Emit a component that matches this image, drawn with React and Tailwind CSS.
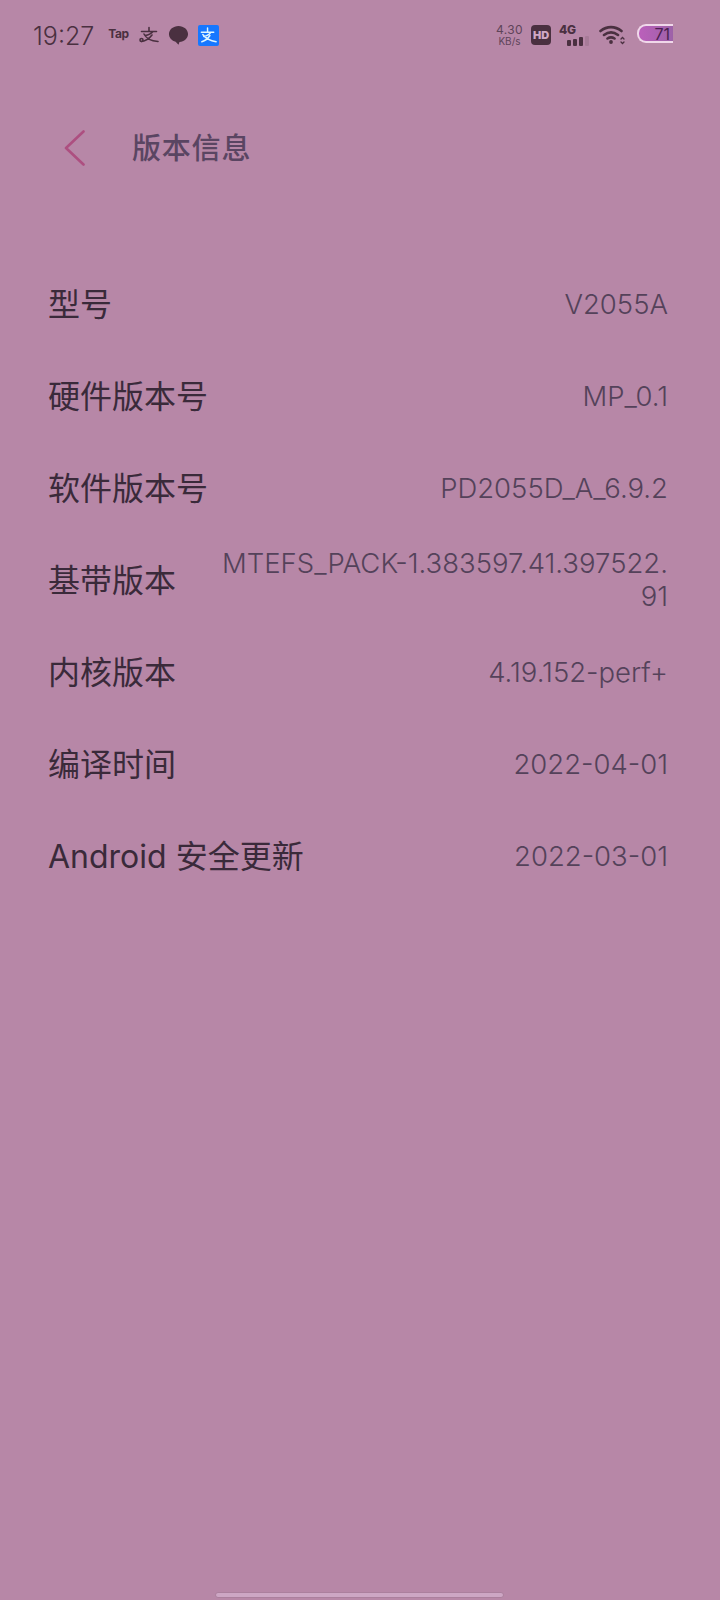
const sans = { fontFamily: '"Inter","Noto Sans CJK SC",sans-serif' };
const rows = [
  ["型号", ["V2055A"]],
  ["硬件版本号", ["MP_0.1"]],
  ["软件版本号", ["PD2055D_A_6.9.2"]],
  ["基带版本", ["MTEFS_PACK-1.383597.41.397522.", "91"]],
  ["内核版本", ["4.19.152-perf+"]],
  ["编译时间", ["2022-04-01"]],
  ["Android 安全更新", ["2022-03-01"]],
];

function StatusBar() {
  return (
    <div className="flex h-[70px] items-center justify-between pl-[33px] pr-[47px] text-[#4a3040]">
      <div className="flex items-center">
        <span className="mt-[3px] text-[25px] font-light leading-none">19:27</span>
        <span className="ml-[14px] -mt-[3px] text-[12px] font-bold leading-none tracking-[-0.5px]">Tap</span>
        <svg className="ml-[11px]" width="20" height="18" viewBox="0 0 20 18" fill="none" stroke="#4a3040" strokeWidth="1.6" strokeLinecap="round">
          <path d="M10 1.500v3.500M2.500 5.500h15M6 9.500c3-.4 6-1.500 8-4M5 8c2 4 7 7 14 7.500M13 9C10 13 6 15 2.500 15.500" />
          <circle cx="2.500" cy="14" r="1.500" />
        </svg>
        <svg className="ml-[9px]" width="21" height="21" viewBox="0 0 22 22">
          <path d="M11 1C5.500 1 1 4.800 1 9.500c0 3.900 3 7.100 7 8.100l3 3 1-2.700c5-.4 9-4 9-8.400C21 4.800 16.500 1 11 1z" fill="#4a3040" />
        </svg>
        <svg className="ml-[9px]" width="21" height="21" viewBox="0 0 22 22">
          <rect width="22" height="22" rx="2" fill="#1677ff" />
          <path d="M10 3v4M3.500 7.500h13M6 12c3.500-.6 6-2 7.500-4.500M5 10c3 4 8 6.500 14 7.500M12.500 11c-2 3-5 5.500-8.500 6.500" fill="none" stroke="#dff6ff" strokeWidth="1.500" strokeLinecap="round" />
        </svg>
      </div>
      <div className="flex items-center">
        <div className="flex flex-col items-center text-[#5e4459]">
          <span className="text-[12px] leading-[12px] tracking-[0.4px]">4.30</span>
          <span className="text-[10px] leading-[10px]">KB/s</span>
        </div>
        <span className="ml-[8px] flex h-[20px] w-[20px] items-center justify-center rounded-[4px] bg-[#4a3040] text-[11px] font-black leading-none text-[#d0a8c4]">HD</span>
        <div className="ml-[8px] flex w-[32px] flex-col">
          <span className="text-[12px] font-extrabold leading-[12px] tracking-[-0.3px]">4G</span>
          <svg width="32" height="10" viewBox="0 0 32 10">
            <rect x="8" y="4" width="4" height="6" rx="1" fill="#4a3040" />
            <rect x="14" y="3" width="4" height="7" rx="1" fill="#4a3040" />
            <rect x="20" y="1" width="4" height="9" rx="1" fill="#4a3040" />
            <rect x="26" y="0" width="4" height="10" rx="1" fill="#a77b98" />
          </svg>
        </div>
        <svg className="ml-[8px]" width="26" height="20" viewBox="0 0 26 20" fill="none" stroke="#4a3040" strokeWidth="2.600" strokeLinecap="round">
          <path d="M1.500 6C8 .8 16 .8 22.500 6M5 10c4.500-3.400 9.500-3.400 14 0M8.500 13.500c2.300-1.500 4.700-1.500 7 0" />
          <circle cx="12" cy="17" r="1.900" fill="#4a3040" stroke="none" />
          <path d="M22 14l1.500-1.500L25 14M22 17l1.500 1.500L25 17" strokeWidth="1.300" />
        </svg>
        <div className="ml-[12px] -mt-[3px] flex h-[19px] w-[36px] items-center justify-end overflow-hidden rounded-l-[9px] border-y-2 border-l-2 border-r-0 border-[#f0d8ea] bg-gradient-to-r from-[#bb5fbb] to-[#9d62a8] pr-[3px]">
          <span className="text-[16px] leading-none text-[#4a1f50]">71</span>
        </div>
      </div>
    </div>
  );
}

export default function App() {
  return (
    <div style={sans} className="flex h-[1600px] w-[720px] flex-col overflow-hidden bg-[#b787a7]">
      <StatusBar />
      <header className="mt-[46px] flex h-[64px] items-center pl-[64px]">
        <svg width="22" height="36" viewBox="0 0 22 36" fill="none" stroke="#ad4f80" strokeWidth="2.600" strokeLinecap="round" strokeLinejoin="round">
          <path d="M19.500 1.500L2 18l17.500 16.500" />
        </svg>
        <h1 className="ml-[46px] text-[29px] font-medium leading-none tracking-[0.8px] text-[#5a4562]">版本信息</h1>
      </header>
      <main className="mt-[78px] flex flex-col pl-[48px] pr-[52px]">
        {rows.map(([label, value]) => (
          <div key={label} className="flex h-[92px] items-center justify-between">
            <span className="mt-[1px] whitespace-nowrap text-[32px] leading-none text-[#3a2a3a]">{label}</span>
            <span className="text-right text-[27.5px] font-light leading-[33px] text-[#54425a]">
              {value.map((line) => <span key={line} className="block whitespace-nowrap">{line}</span>)}
            </span>
          </div>
        ))}
      </main>
      <div className="mt-auto mb-[2px] ml-[215px] h-[6px] w-[289px] rounded-full border border-[#ab7f9d] bg-[#cda6c4]" />
    </div>
  );
}
